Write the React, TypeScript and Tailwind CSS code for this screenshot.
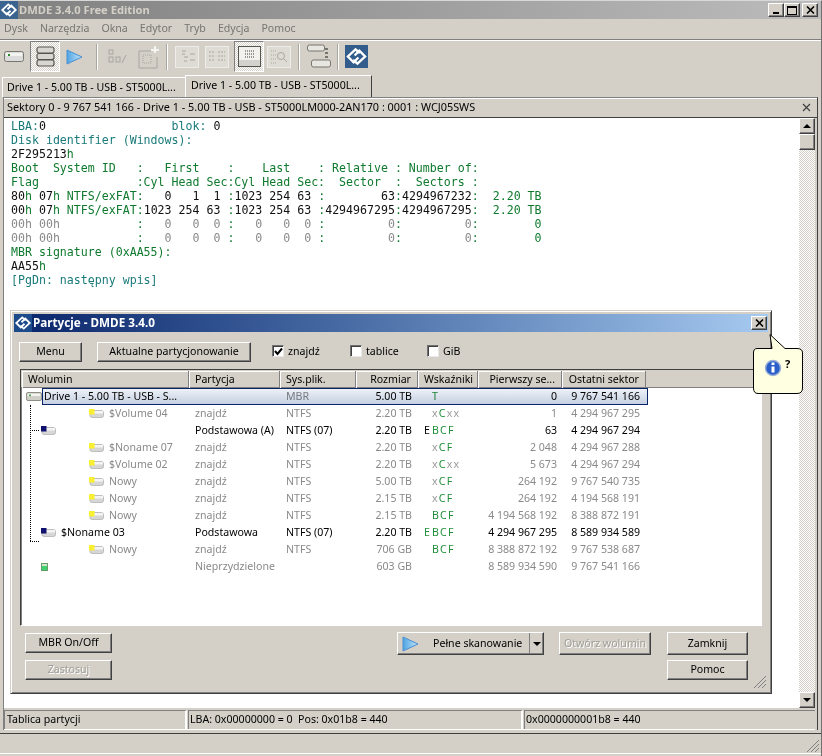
import React from "react";

const raised =
  "border border-t-white border-l-white border-r-[#404040] border-b-[#404040] shadow-[inset_-1px_-1px_0_#808080] bg-[#d4d0c8]";
const dither = "bg-[repeating-conic-gradient(#d4d0c8_0_25%,#ffffff_0_50%)] bg-[length:2px_2px]";
const pressed = `w-[30px] h-[31px] ${dither} border border-t-[#808080] border-l-[#808080] border-r-white border-b-white flex items-center justify-center`;
const sep = "w-[2px] h-[26px] bg-[#a8a69f] border-r border-r-white";

const Logo = ({ size = 16, bg = "#3a6390" }: { size?: number; bg?: string }) => (
  <svg width={size} height={size} viewBox="0 0 24 24">
    <rect width="24" height="24" fill={bg} />
    <path d="M15.5 8.5 L11 4.5 L3 12 L9 18 L14 13" fill="none" stroke="#fff" strokeWidth="2.4" />
    <path d="M8.5 15.5 L13 19.5 L21 12 L15 6 L10 11" fill="none" stroke="#fff" strokeWidth="2.4" />
  </svg>
);

const Play = ({ w = 17, h = 16 }: { w?: number; h?: number }) => (
  <svg width={w} height={h} viewBox="0 0 17 16">
    <defs>
      <linearGradient id="pl" x1="0" y1="0" x2="1" y2="0">
        <stop offset="0" stopColor="#4ea4e4" />
        <stop offset="1" stopColor="#c4e4f8" />
      </linearGradient>
    </defs>
    <path d="M1 1 L16 8 L1 15 Z" fill="url(#pl)" stroke="#4a90d0" />
  </svg>
);

const ToolFrame = ({ children }: { children: React.ReactNode }) => (
  <svg width="24" height="22" viewBox="0 0 24 22">
    <rect x="0.5" y="0.5" width="23" height="21" fill="#dedbd4" stroke="#eeece8" />
    <g stroke="#a8a69f" fill="none">{children}</g>
  </svg>
);

const DriveIcon = ({ dot = "#fff", w = 20, h = 11, x = "#dcdcdc" }: { dot?: string; w?: number; h?: number; x?: string }) => (
  <svg width={w} height={h} viewBox="0 0 20 11">
    <rect x="0.5" y="0.5" width="19" height="10" rx="2" fill={x} stroke="#77776f" />
    <rect x="2" y="2" width="16" height="3" fill="#f3f3ef" />
    <rect x="4" y="3" width="2" height="2" fill={dot} />
  </svg>
);

const PartIcon = ({ color }: { color: string }) => (
  <svg width="15" height="9" viewBox="0 0 15 9" className="shrink-0">
    <rect x="1" y="1.5" width="13.5" height="7" rx="2" fill="#d6d6d6" stroke="#a0a0a0" strokeWidth="0.6" />
    <rect x="5" y="2" width="9" height="2.5" fill="#f4f4f4" />
    <rect x="0" y="0" width="5.5" height="5.5" fill={color} />
  </svg>
);

const Btn = ({ children, className, off }: { children: React.ReactNode; className: string; off?: boolean }) => (
  <div
    className={`${raised} ${className} flex items-center justify-center ${
      off ? "text-[#a09e98] [text-shadow:1px_1px_0_#fff]" : "text-black"
    }`}
  >
    {children}
  </div>
);

const Check = ({ on, label, className }: { on?: boolean; label: string; className: string }) => (
  <div className={`flex items-center gap-[4px] ${className}`}>
    <div className="w-[12px] h-[12px] bg-white border border-t-[#707070] border-l-[#707070] border-r-[#e8e8e8] border-b-[#e8e8e8] shadow-[inset_1px_1px_0_#404040] flex items-center justify-center">
      {on && (
        <svg width="9" height="9" viewBox="0 0 9 9">
          <path d="M1 4 L3.5 7 L8 1.5" fill="none" stroke="#000" strokeWidth="2" />
        </svg>
      )}
    </div>
    <span>{label}</span>
  </div>
);

const TEAL = "text-[#1a7a7a]";
const GREEN = "text-[#0f7a2e]";
const DARK = "text-[#101010]";
const GRAY = "text-[#8a8a8a]";

type Seg = [string, string];
const dump: Seg[][] = [
  [["LBA:", TEAL], ["0", DARK], ["                  blok: ", TEAL], ["0", DARK]],
  [["Disk identifier (Windows):", TEAL]],
  [["2F295213", DARK], ["h", GREEN]],
  [["Boot  System ID   :   First    :    Last    : Relative : Number of:", GREEN]],
  [["Flag              :Cyl Head Sec:Cyl Head Sec:  Sector  :  Sectors :", GREEN]],
  [
    ["80", DARK], ["h ", GREEN], ["07", DARK], ["h NTFS/exFAT:", GREEN],
    ["   0   1  1 ", DARK], [":", GREEN], ["1023 254 63 ", DARK], [":", GREEN],
    ["        63", DARK], [":", GREEN], ["4294967232", DARK], [":", GREEN], ["  2.20 TB", GREEN],
  ],
  [
    ["00", DARK], ["h ", GREEN], ["07", DARK], ["h NTFS/exFAT:", GREEN],
    ["1023 254 63 ", DARK], [":", GREEN], ["1023 254 63 ", DARK], [":", GREEN],
    ["4294967295", DARK], [":", GREEN], ["4294967295", DARK], [":", GREEN], ["  2.20 TB", GREEN],
  ],
  [
    ["00h 00h           ", GRAY], [":", GREEN], ["   0   0  0 ", GRAY], [":", GREEN], ["   0   0  0 ", GRAY], [":", GREEN],
    ["         0", GRAY], [":", GREEN], ["         0", GRAY], [":", GREEN], ["        0", GREEN],
  ],
  [
    ["00h 00h           ", GRAY], [":", GREEN], ["   0   0  0 ", GRAY], [":", GREEN], ["   0   0  0 ", GRAY], [":", GREEN],
    ["         0", GRAY], [":", GREEN], ["         0", GRAY], [":", GREEN], ["        0", GREEN],
  ],
  [["MBR signature (0xAA55):", GREEN]],
  [["AA55", DARK], ["h", GREEN]],
  [["[PgDn: następny wpis]", TEAL]],
];

type Row = {
  icon?: string;
  name: string;
  part: string;
  fs: string;
  size: string;
  e?: string;
  flags?: Seg[];
  first: string;
  last: string;
  dark?: boolean;
};

const Y = "#f8f030";
const B = "#10106e";
const G1 = "text-[#9a9a9a]";
const G2 = "text-[#1f8f3a]";
const fl = (...s: Seg[]) => s;

const rows: Row[] = [
  { name: "$Volume 04", part: "znajdź", fs: "NTFS", size: "2.20 TB", flags: fl(["x", G1], ["C", G2], ["xx", G1]), first: "1", last: "4 294 967 295", icon: Y },
  { name: "", part: "Podstawowa (A)", fs: "NTFS (07)", size: "2.20 TB", e: "text-black", flags: fl(["BCF", G2]), first: "63", last: "4 294 967 294", icon: B, dark: true },
  { name: "$Noname 07", part: "znajdź", fs: "NTFS", size: "2.20 TB", flags: fl(["x", G1], ["CF", G2]), first: "2 048", last: "4 294 967 288", icon: Y },
  { name: "$Volume 02", part: "znajdź", fs: "NTFS", size: "2.20 TB", flags: fl(["x", G1], ["C", G2], ["xx", G1]), first: "5 673", last: "4 294 967 294", icon: Y },
  { name: "Nowy", part: "znajdź", fs: "NTFS", size: "5.00 TB", flags: fl(["x", G1], ["CF", G2]), first: "264 192", last: "9 767 540 735", icon: Y },
  { name: "Nowy", part: "znajdź", fs: "NTFS", size: "2.15 TB", flags: fl(["x", G1], ["CF", G2]), first: "264 192", last: "4 194 568 191", icon: Y },
  { name: "Nowy", part: "znajdź", fs: "NTFS", size: "2.15 TB", flags: fl(["BCF", G2]), first: "4 194 568 192", last: "8 388 872 191", icon: Y },
  { name: "$Noname 03", part: "Podstawowa", fs: "NTFS (07)", size: "2.20 TB", e: G2, flags: fl(["BCF", G2]), first: "4 294 967 295", last: "8 589 934 589", icon: B, dark: true },
  { name: "Nowy", part: "znajdź", fs: "NTFS", size: "706 GB", flags: fl(["BCF", G2]), first: "8 388 872 192", last: "9 767 538 687", icon: Y },
  { name: "", part: "Nieprzydzielone", fs: "", size: "603 GB", first: "8 589 934 590", last: "9 767 541 166" },
];

const Cells = ({ r }: { r: Row }) => (
  <>
    <div className="w-[91px] pl-[6px] shrink-0 whitespace-nowrap">{r.part}</div>
    <div className="w-[76px] pl-[6px] shrink-0 whitespace-nowrap">{r.fs}</div>
    <div className="w-[62px] pr-[6px] text-right shrink-0 whitespace-nowrap">{r.size}</div>
    <div className="w-[60px] pl-[6px] shrink-0 flex tracking-[1.2px]">
      <span className={`w-[8px] ${r.e ?? ""}`}>{r.e ? "E" : ""}</span>
      {r.flags?.map((s, i) => (
        <span key={i} className={s[1]}>
          {s[0]}
        </span>
      ))}
    </div>
    <div className="w-[84px] pr-[5px] text-right shrink-0 whitespace-nowrap">{r.first}</div>
    <div className="w-[84px] pr-[6px] text-right shrink-0 whitespace-nowrap">{r.last}</div>
  </>
);

const Head = ({ w, children, right }: { w: string; children: React.ReactNode; right?: boolean }) => (
  <div
    className={`${w} shrink-0 h-[17px] flex items-center px-[6px] whitespace-nowrap border-r border-r-[#808080] shadow-[inset_1px_1px_0_#fff] ${
      right ? "justify-end" : ""
    }`}
  >
    {children}
  </div>
);

const Grip = () => (
  <svg width="14" height="14" viewBox="0 0 14 14" className="absolute right-[1px] bottom-[1px]">
    <path d="M13 1 L1 13 M13 5 L5 13 M13 9 L9 13" stroke="#808080" />
  </svg>
);

export default function App() {
  return (
    <div
      className="relative w-[822px] h-[756px] overflow-hidden bg-[#d4d0c8] flex flex-col text-[10.6px] text-black border-t border-r border-r-[#707070] border-t-[#d8d8d8]"
      style={{ fontFamily: '"Noto Sans", Tahoma, sans-serif' }}
    >
      {/* window title */}
      <div className="h-[18px] flex items-center bg-gradient-to-r from-[#808080] to-[#bcbcbc] pr-[3px] shrink-0">
        <Logo size={18} bg="#3a6390" />
        <span className="ml-[1px] font-bold text-[11.2px] text-[#d4d0c8]">DMDE 3.4.0 Free Edition</span>
        <div className="ml-auto flex gap-0 items-center">
          <div className={`${raised} w-[16px] h-[14px] flex items-end justify-center pb-[2px]`}>
            <div className="w-[6px] h-[2px] bg-black" />
          </div>
          <div className={`${raised} w-[16px] h-[14px] flex items-center justify-center`}>
            <div className="w-[10px] h-[9px] border border-black border-t-2" />
          </div>
          <div className={`${raised} w-[16px] h-[14px] ml-[2px] flex items-center justify-center`}>
            <svg width="9" height="8" viewBox="0 0 9 8">
              <path d="M1 0.5 L8 7.5 M8 0.5 L1 7.5" stroke="#000" strokeWidth="1.6" />
            </svg>
          </div>
        </div>
      </div>

      {/* menu */}
      <div className="h-[21px] flex items-center gap-[12px] pl-[4px] text-[#77756f] border-b border-b-[#808080] shrink-0">
        {["Dysk", "Narzędzia", "Okna", "Edytor", "Tryb", "Edycja", "Pomoc"].map((m) => (
          <span key={m}>{m}</span>
        ))}
      </div>

      {/* toolbar */}
      <div className="h-[35px] pb-[3px] border-t border-t-white flex items-center pl-[4px] shrink-0">
        <div className="w-[22px] flex justify-start">
          <DriveIcon dot="#2a8a2a" />
        </div>
        <div className={`${pressed} ml-[4px]`}>
          <svg width="19" height="21" viewBox="0 0 19 21">
            <g fill="#d8d6d0" stroke="#55554f" strokeWidth="1.2">
              <rect x="1" y="1" width="17" height="6" rx="2" />
              <rect x="1" y="7.5" width="17" height="6" rx="2" />
              <rect x="1" y="14" width="17" height="6" rx="2" />
            </g>
          </svg>
        </div>
        <div className="ml-[6px]">
          <Play />
        </div>
        <div className={`${sep} ml-[13px]`} />
        <svg width="20" height="20" viewBox="0 0 20 20" className="ml-[9px]">
          <g stroke="#a8a69f" fill="none">
            <rect x="2" y="3" width="4" height="4" />
            <rect x="2" y="10" width="4" height="5" />
            <rect x="9" y="10" width="4" height="5" />
            <path d="M15 16 L19 8" />
          </g>
        </svg>
        <svg width="22" height="24" viewBox="0 0 22 24" className="ml-[11px]">
          <g stroke="#a8a69f" fill="none">
            <path d="M1 6 H13 M1 6 V23 H19 V12" />
            <rect x="5" y="10" width="8" height="8" strokeDasharray="1 1" />
            <path d="M17 1 V8 M13 5 H21" stroke="#f4f4f0" strokeWidth="2" />
          </g>
        </svg>
        <div className={`${sep} ml-[6px]`} />
        <div className="ml-[7px]">
          <ToolFrame>
            <path d="M7 5 H11 M7 8 H10 M9 11 H13 M9 15 H12 M15 8 H20 M15 14 H20" />
          </ToolFrame>
        </div>
        <div className="ml-[6px]">
          <ToolFrame>
            <path d="M4 6 H10 M4 10 H10 M4 14 H10 M13 6 H20 M13 10 H20 M13 14 H20" strokeDasharray="2 1" />
          </ToolFrame>
        </div>
        <div className={`${pressed} ml-[5px]`}>
          <svg width="23" height="21" viewBox="0 0 23 21">
            <rect x="0.5" y="0.5" width="22" height="20" fill="#f2f1ee" stroke="#55554f" />
            <rect x="1" y="14" width="21" height="6" fill="#d4d2cc" />
            <path d="M7 5 H16 M7 8 H16 M7 11 H16" stroke="#7a7a74" strokeWidth="1.4" strokeDasharray="1 1" />
          </svg>
        </div>
        <div className="ml-[3px]">
          <ToolFrame>
            <path d="M4 5 H9 M4 9 H9 M4 13 H9 M4 17 H9" strokeDasharray="1 1" />
            <circle cx="14" cy="10" r="3.5" />
            <path d="M17 13 L20 16" />
          </ToolFrame>
        </div>
        <div className={`${sep} ml-[7px]`} />
        <svg width="24" height="25" viewBox="0 0 24 25" className="ml-[7px]">
          <g fill="#e8e6e0" stroke="#77756f">
            <rect x="0.5" y="1" width="17" height="6" rx="2" />
            <rect x="4.5" y="16" width="19" height="7" rx="2" />
          </g>
          <g fill="#77756f">
            <rect x="18" y="4" width="3" height="2" />
            <rect x="18" y="8" width="3" height="2" />
            <rect x="18" y="12" width="3" height="2" />
          </g>
        </svg>
        <div className={`${sep} ml-[6px]`} />
        <div className="ml-[6px]">
          <Logo size={23} bg="#325c8c" />
        </div>
      </div>

      {/* tabs */}
      <div className="h-[22px] flex items-end pl-[2px] shrink-0">
        <div className="w-[183px] h-[20px] border-t border-l border-t-white border-l-white flex items-center pl-[4px] whitespace-nowrap">
          Drive 1 - 5.00 TB - USB - ST5000L...
        </div>
        <div className="w-[187px] h-[22px] border-t border-l border-r border-t-white border-l-white border-r-[#404040] flex items-start pt-[2px] pl-[5px] whitespace-nowrap">
          Drive 1 - 5.00 TB - USB - ST5000L...
        </div>
      </div>

      {/* document panel */}
      <div className="flex-1 min-h-0 ml-[3px] mr-[3px] border-t border-l border-t-[#808080] border-l-[#808080] border-r border-r-[#404040] shadow-[inset_0_1px_0_#fff] flex flex-col">
        <div className="h-[20px] flex items-center pl-[3px] pr-[6px] border-b border-b-[#404040] shrink-0 whitespace-nowrap text-[10.85px]">
          <span>Sektory 0 - 9 767 541 166 - Drive 1 - 5.00 TB - USB - ST5000LM000-2AN170 : 0001 : WCJ05SWS</span>
          <svg width="9" height="9" viewBox="0 0 9 9" className="ml-auto">
            <path d="M1 1 L8 8 M8 1 L1 8" stroke="#404040" strokeWidth="1.2" />
          </svg>
        </div>
        <div className="flex-1 min-h-0 flex pr-[2px]">
          <div className="flex-1 min-w-0 bg-white pl-[7px] pt-[1px] font-['DejaVu_Sans_Mono',monospace] text-[11.6px] leading-[14px] whitespace-pre">
            {dump.map((line, i) => (
              <div key={i} className="h-[14px]">
                {line.map((s, j) => (
                  <span key={j} className={s[1]}>
                    {s[0]}
                  </span>
                ))}
              </div>
            ))}
          </div>
          <div className={`w-[16px] flex flex-col ${dither}`}>
            <div className={`${raised} h-[16px] flex items-center justify-center`}>
              <div className="w-0 h-0 border-x-[4px] border-x-transparent border-b-[4px] border-b-black" />
            </div>
            <div className={`${raised} h-[16px]`} />
            <div className="flex-1" />
            <div className={`${raised} h-[16px] flex items-center justify-center`}>
              <div className="w-0 h-0 border-x-[4px] border-x-transparent border-t-[4px] border-t-black" />
            </div>
          </div>
        </div>
        <div className="h-[22px] pt-[2px] mr-[2px] flex shrink-0 border-b border-b-white">
          <div className="w-[183px] flex items-center pl-[2px] border-l border-l-[#808080] border-t border-t-[#808080] border-r-2 border-r-white">
            Tablica partycji
          </div>
          <div className="w-[335px] ml-[1px] flex items-center pl-[1px] border-l border-l-[#808080] border-t border-t-[#808080] border-r-2 border-r-white">
            LBA: 0x00000000 = 0&nbsp; Pos: 0x01b8 = 440
          </div>
          <div className="flex-1 ml-[1px] flex items-center pl-[1px] border-l border-l-[#808080] border-t border-t-[#808080]">
            0x0000000001b8 = 440
          </div>
        </div>
      </div>

      {/* bottom status */}
      <div className="h-[23px] mt-[3px] border-t border-t-[#404040] relative shrink-0 border-b-2 border-b-[#d4d0c8]">
        <div className="absolute left-0 right-0 bottom-0 h-px bg-white" />
        <Grip />
      </div>

      {/* partition dialog */}
      <div className="absolute left-[10px] top-[309px] w-[762px] h-[384px] bg-[#d4d0c8] border border-t-[#d4d0c8] border-l-[#d4d0c8] border-r-[#404040] border-b-[#404040] shadow-[inset_1px_1px_0_#fff,inset_-1px_-1px_0_#808080] p-[3px] flex flex-col">
        <div className="h-[18px] bg-gradient-to-r from-[#0a246a] to-[#a6caf0] flex items-center shrink-0">
          <Logo size={18} bg="#1c4a8a" />
          <span className="ml-[1px] text-white font-bold text-[11.7px]">Partycje - DMDE 3.4.0</span>
          <div className={`${raised} w-[16px] h-[14px] ml-auto mr-[1px] flex items-center justify-center`}>
            <svg width="9" height="8" viewBox="0 0 9 8">
              <path d="M1 0.5 L8 7.5 M8 0.5 L1 7.5" stroke="#000" strokeWidth="1.6" />
            </svg>
          </div>
        </div>
        <div className="h-[37px] pt-[2px] flex items-center shrink-0 pl-[5px]">
          <Btn className="w-[63px] h-[20px]">Menu</Btn>
          <Btn className="w-[154px] h-[20px] ml-[15px]">Aktualne partycjonowanie</Btn>
          <Check on label="znajdź" className="ml-[21px] w-[78px]" />
          <Check label="tablice" className="w-[77px]" />
          <Check label="GiB" className="w-[60px]" />
        </div>

        {/* list */}
        <div className="mx-[6px] h-[257px] shrink-0 border border-t-[#404040] border-l-[#404040] border-r-white border-b-white shadow-[inset_1px_1px_0_#808080] flex flex-col bg-white overflow-hidden">
          <div className="flex h-[18px] shrink-0 bg-[#d4d0c8] pt-[1px] pl-[1px] border-b border-b-[#808080]">
            <Head w="w-[167px]">Wolumin</Head>
            <Head w="w-[91px]">Partycja</Head>
            <Head w="w-[76px]">Sys.plik.</Head>
            <Head w="w-[62px]" right>Rozmiar</Head>
            <Head w="w-[60px]">Wskaźniki</Head>
            <Head w="w-[84px]" right>Pierwszy se...</Head>
            <Head w="w-[84px]" right>Ostatni sektor</Head>
          </div>
          <div className="relative flex-1 text-[#8a8a8a]">
            {/* tree lines */}
            <div className="absolute left-[9px] top-[17px] w-px h-[136px] border-l border-dotted border-l-black" />
            <div className="absolute left-[9px] top-[42px] w-[9px] border-t border-dotted border-t-black" />
            <div className="absolute left-[9px] top-[153px] w-[9px] border-t border-dotted border-t-black" />

            {/* drive row */}
            <div className="flex h-[17px] items-center pl-[1px]">
              <div className="w-[167px] shrink-0 flex items-center pl-[4px] text-black">
                <DriveIcon dot="#2a8a2a" w={16} h={9} x="#cfcfc8" />
                <span className="ml-[2px] whitespace-nowrap">Drive 1 - 5.00 TB - USB - S...</span>
              </div>
              <div className="w-[91px] shrink-0" />
              <div className="w-[76px] shrink-0 pl-[6px]">MBR</div>
              <div className="w-[62px] shrink-0 pr-[6px] text-right text-black">5.00 TB</div>
              <div className={`w-[60px] shrink-0 pl-[14px] ${G2}`}>T</div>
              <div className="w-[84px] shrink-0 pr-[5px] text-right text-black">0</div>
              <div className="w-[84px] shrink-0 pr-[6px] text-right text-black">9 767 541 166</div>
            </div>
            <div className="absolute left-[21px] top-0 w-[606px] h-[17px] border border-[#0a246a] mix-blend-multiply bg-gradient-to-b from-[#eef2f8] to-[#c6d0e2]" />

            {rows.map((r, i) => {
              const deep = r.icon === Y;
              return (
                <div key={i} className={`flex h-[17px] items-center pl-[1px] ${r.dark ? "text-black" : ""}`}>
                  <div className={`w-[167px] shrink-0 flex items-center ${deep ? "pl-[67px]" : "pl-[19px]"}`}>
                    {r.icon ? (
                      <PartIcon color={r.icon} />
                    ) : (
                      <div className="w-[7px] h-[8px] border border-[#6a9a6a] bg-[#40d070] shadow-[inset_0_2px_0_#d0e8d0]" />
                    )}
                    <span className="ml-[5px] whitespace-nowrap">{r.name}</span>
                  </div>
                  <Cells r={r} />
                </div>
              );
            })}
          </div>
        </div>

        {/* dialog buttons */}
        <div className="relative flex-1 flex pt-[7px] pl-[11px]">
          <div className="flex flex-col gap-[7px]">
            <Btn className="w-[87px] h-[20px]">MBR On/Off</Btn>
            <Btn className="w-[87px] h-[20px]" off>
              Zastosuj
            </Btn>
          </div>
          <div className={`${raised} w-[147px] h-[23px] ml-[285px] -mt-[1px] flex items-center`}>
            <div className="ml-[4px]">
              <Play w={17} h={16} />
            </div>
            <span className="ml-[14px] whitespace-nowrap">Pełne skanowanie</span>
            <div className="ml-auto w-[14px] h-full border-l border-l-[#808080] flex items-center justify-center">
              <div className="w-0 h-0 border-x-[4px] border-x-transparent border-t-[4px] border-t-black" />
            </div>
          </div>
          <Btn className="w-[92px] h-[23px] ml-[15px] -mt-[1px]" off>
            Otwórz wolumin
          </Btn>
          <div className="flex flex-col gap-[5px] ml-[16px] -mt-[1px]">
            <Btn className="w-[81px] h-[23px]">Zamknij</Btn>
            <Btn className="w-[81px] h-[20px]">Pomoc</Btn>
          </div>
          <Grip />
        </div>
      </div>

      {/* balloon tip */}
      <svg width="52" height="62" viewBox="0 0 52 62" className="absolute left-[752px] top-[332px]">
        <path
          d="M5 15.5 H20 L18 1.5 L33 15.5 H45 Q50.5 15.5 50.5 20 V55 Q50.5 60.5 45 60.5 H6 Q1.5 60.5 1.5 55 V20 Q1.5 15.5 5 15.5 Z"
          fill="#ffffe1"
          stroke="#000"
        />
        <circle cx="21" cy="35" r="7.5" fill="#2a5ec8" stroke="#9ab0d8" strokeWidth="1.5" />
        <rect x="19.5" y="33.5" width="3" height="6" fill="#fff" />
        <rect x="19.5" y="29.5" width="3" height="2.5" fill="#fff" />
      </svg>
      <span className="absolute left-[785px] top-[355px] font-bold text-[11px]">?</span>
    </div>
  );
}
